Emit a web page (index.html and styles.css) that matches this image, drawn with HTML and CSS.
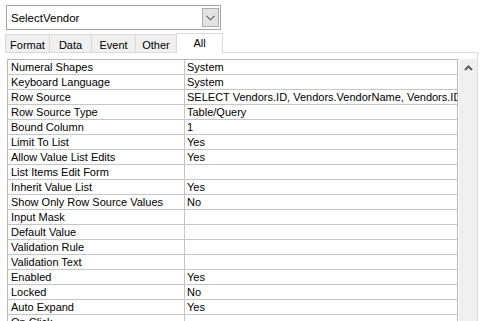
FILE: index.html
```html
<!DOCTYPE html>
<html>
<head>
<meta charset="utf-8">
<link rel="stylesheet" href="styles.css">
</head>
<body>
<div class="page">
  <div class="combo">
    <span class="combo-text">SelectVendor</span>
    <span class="combo-btn">
      <svg width="9" height="6" viewBox="0 0 9 6"><polyline points="0.5,0.8 4.5,4.8 8.5,0.8" fill="none" stroke="#5a5a5a" stroke-width="1.1"/></svg>
    </span>
  </div>
  <div class="tabstrip">
    <div class="tab t-format">Format</div>
    <div class="tab t-data">Data</div>
    <div class="tab t-event">Event</div>
    <div class="tab t-other">Other</div>
    <div class="tab active">All</div>
    <div class="tab-fill"></div>
  </div>
  <div class="panel">
    <div class="grid">
      <div class="row"><div class="k">Numeral Shapes</div><div class="v">System</div></div>
      <div class="row"><div class="k">Keyboard Language</div><div class="v">System</div></div>
      <div class="row"><div class="k">Row Source</div><div class="v">SELECT Vendors.ID, Vendors.VendorName, Vendors.ID FROM Vendors;</div></div>
      <div class="row"><div class="k">Row Source Type</div><div class="v">Table/Query</div></div>
      <div class="row"><div class="k">Bound Column</div><div class="v">1</div></div>
      <div class="row"><div class="k">Limit To List</div><div class="v">Yes</div></div>
      <div class="row"><div class="k">Allow Value List Edits</div><div class="v">Yes</div></div>
      <div class="row"><div class="k">List Items Edit Form</div><div class="v"></div></div>
      <div class="row"><div class="k">Inherit Value List</div><div class="v">Yes</div></div>
      <div class="row"><div class="k">Show Only Row Source Values</div><div class="v">No</div></div>
      <div class="row"><div class="k">Input Mask</div><div class="v"></div></div>
      <div class="row"><div class="k">Default Value</div><div class="v"></div></div>
      <div class="row"><div class="k">Validation Rule</div><div class="v"></div></div>
      <div class="row"><div class="k">Validation Text</div><div class="v"></div></div>
      <div class="row"><div class="k">Enabled</div><div class="v">Yes</div></div>
      <div class="row"><div class="k">Locked</div><div class="v">No</div></div>
      <div class="row"><div class="k">Auto Expand</div><div class="v">Yes</div></div>
      <div class="row"><div class="k">On Click</div><div class="v"></div></div>
    </div>
    <div class="scroll">
      <div class="scroll-up">
        <svg width="9" height="6" viewBox="0 0 9 6"><polyline points="1,5 4.5,1.5 8,5" fill="none" stroke="#606060" stroke-width="2"/></svg>
      </div>
    </div>
  </div>
</div>
</body>
</html>
```
FILE: styles.css
```css
html, body {
  margin: 0;
  padding: 0;
  background: #ffffff;
  overflow: hidden;
}
body {
  width: 487px;
  height: 321px;
  font-family: "Liberation Sans", Arial, sans-serif;
  font-size: 11px;
  color: #000;
}
.page {
  display: flex;
  flex-direction: column;
  height: 321px;
  overflow: hidden;
}
.combo {
  box-sizing: border-box;
  margin: 5px 0 0 6px;
  width: 215px;
  height: 25px;
  border: 1px solid #a6a6a6;
  display: flex;
  align-items: center;
  justify-content: space-between;
  padding: 0 1px 0 4px;
  flex: none;
}
.combo-text {
  font-size: 11.5px;
  line-height: 14px;
}
.combo-btn {
  box-sizing: border-box;
  width: 17px;
  height: 19px;
  background: #e3e3e3;
  border: 1px solid #adadad;
  display: flex;
  align-items: center;
  justify-content: center;
}
.tabstrip {
  margin: 3px 0 0 5px;
  width: 473px;
  height: 20px;
  display: flex;
  align-items: flex-end;
  flex: none;
}
.tab {
  box-sizing: border-box;
  height: 19px;
  background: #f0f0f0;
  border: 1px solid #d9d9d9;
  border-right: none;
  display: flex;
  align-items: center;
  justify-content: center;
  line-height: 14px;
  padding-top: 2px;
}
.t-format { width: 44px; }
.t-data { width: 42px; }
.t-event { width: 44px; }
.t-other { width: 41px; }
.tab.active {
  width: 47px;
  height: 20px;
  background: #fff;
  border-right: 1px solid #d9d9d9;
  border-bottom: none;
  padding-top: 0;
  padding-bottom: 1px;
}
.tab-fill {
  flex: 1;
  height: 1px;
  align-self: flex-end;
  border-bottom: 1px solid #d9d9d9;
  box-sizing: border-box;
}
.panel {
  margin-left: 5px;
  width: 473px;
  box-sizing: border-box;
  border-right: 1px solid #dcdcdc;
  padding: 6px 1px 0 2px;
  display: flex;
  align-items: flex-start;
  flex: 1;
  min-height: 0;
  overflow: hidden;
}
.grid {
  box-sizing: border-box;
  width: 451px;
  border: 1px solid #b9b9b9;
  border-bottom: none;
  display: flex;
  flex-direction: column;
  flex: none;
}
.row {
  display: flex;
  height: 15px;
  box-sizing: border-box;
  border-bottom: 1px solid #c6c6c6;
}
.k {
  box-sizing: border-box;
  width: 177px;
  border-right: 1px solid #c6c6c6;
  padding-left: 3px;
  padding-top: 1px;
  line-height: 13px;
  white-space: nowrap;
  overflow: hidden;
}
.v {
  flex: 1;
  padding-left: 2px;
  padding-top: 1px;
  line-height: 13px;
  white-space: nowrap;
  overflow: hidden;
}
.scroll {
  width: 18px;
  margin-left: 1px;
  height: 300px;
  background: #f0f0f0;
  flex: none;
}
.scroll-up {
  height: 17px;
  display: flex;
  align-items: center;
  justify-content: center;
}
```
